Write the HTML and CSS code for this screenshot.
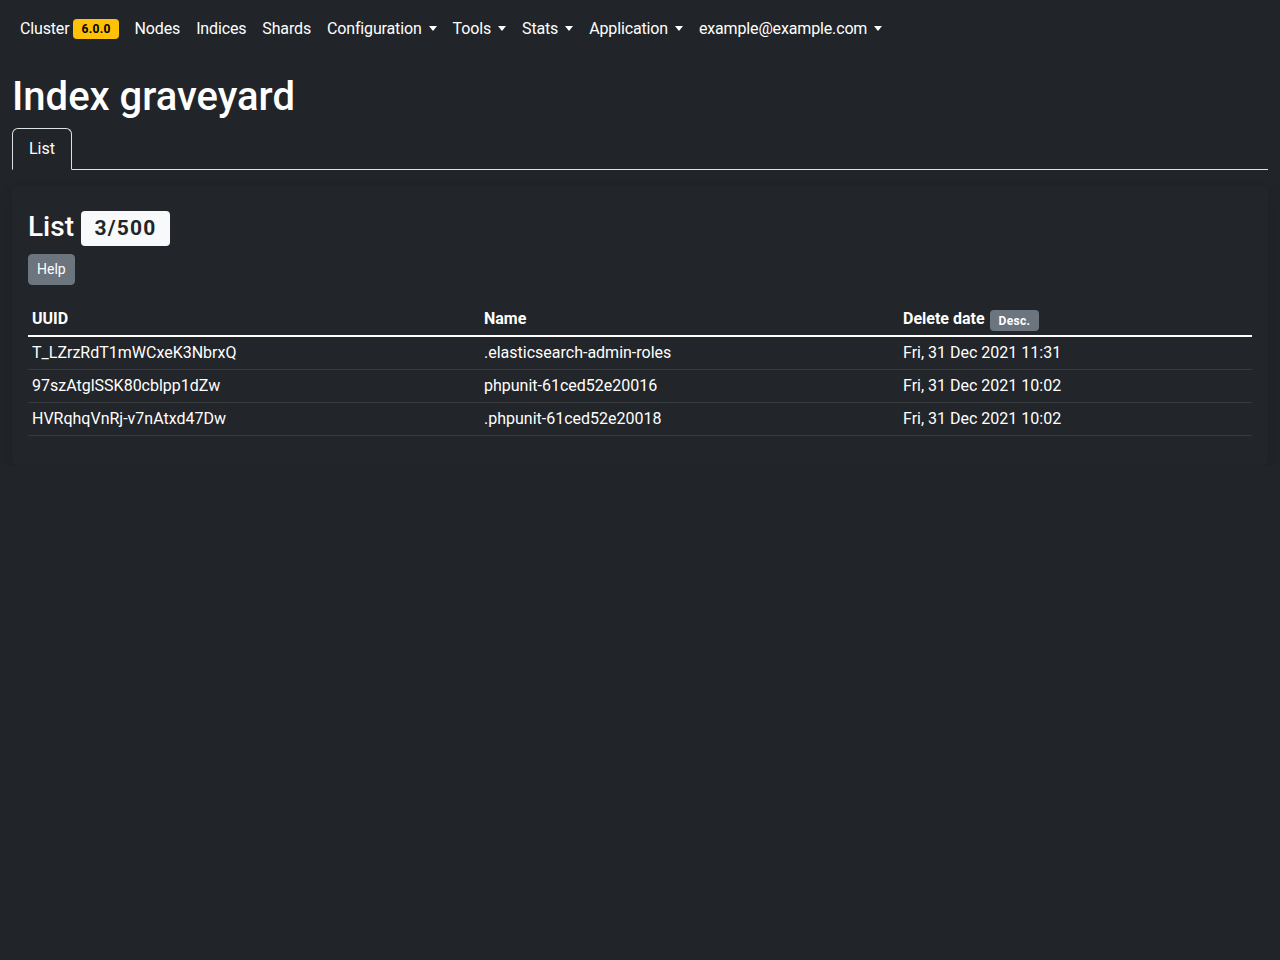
FILE: index.html
```html
<!DOCTYPE html>
<html lang="en">
<head>
<meta charset="utf-8">
<title>Index graveyard</title>
<link rel="stylesheet" href="styles.css">
</head>
<body>
<nav class="navbar">
  <a class="nav-link" href="#">Cluster <span class="badge badge-warning">6.0.0</span></a>
  <a class="nav-link" href="#">Nodes</a>
  <a class="nav-link" href="#">Indices</a>
  <a class="nav-link" href="#">Shards</a>
  <a class="nav-link dropdown" href="#">Configuration</a>
  <a class="nav-link dropdown" href="#">Tools</a>
  <a class="nav-link dropdown" href="#">Stats</a>
  <a class="nav-link dropdown" href="#">Application</a>
  <a class="nav-link dropdown" href="#">example@example.com</a>
</nav>
<main class="container">
  <h1 class="title">Index graveyard</h1>
  <div class="tabs">
    <a class="tab active" href="#">List</a>
  </div>
  <section class="card">
    <h3 class="card-title">List <span class="badge badge-light">3/500</span></h3>
    <button class="btn-help" type="button">Help</button>
    <table class="table">
      <colgroup>
        <col class="c1"><col class="c2"><col class="c3">
      </colgroup>
      <thead>
        <tr><th>UUID</th><th>Name</th><th>Delete date <span class="badge badge-secondary">Desc.</span></th></tr>
      </thead>
      <tbody>
        <tr><td>T_LZrzRdT1mWCxeK3NbrxQ</td><td>.elasticsearch-admin-roles</td><td>Fri, 31 Dec 2021 11:31</td></tr>
        <tr><td>97szAtglSSK80cblpp1dZw</td><td>phpunit-61ced52e20016</td><td>Fri, 31 Dec 2021 10:02</td></tr>
        <tr><td>HVRqhqVnRj-v7nAtxd47Dw</td><td>.phpunit-61ced52e20018</td><td>Fri, 31 Dec 2021 10:02</td></tr>
      </tbody>
    </table>
  </section>
</main>
</body>
</html>
```
FILE: styles.css
```css
* { box-sizing: border-box; }
html, body { margin: 0; padding: 0; }
body {
  background: #212529;
  color: #dee2e6;
  font-family: Roboto, "Liberation Sans", Arial, sans-serif;
  font-size: 16px;
  line-height: 1.5;
}
a { text-decoration: none; }
.navbar {
  display: flex;
  align-items: center;
  height: 56px;
  padding: 0 12px;
}
.nav-link {
  color: #ffffff;
  padding: 8px;
  line-height: 24px;
  display: inline-flex;
  align-items: center;
  position: relative;
  top: 1px;
  letter-spacing: -0.15px;
}
.dropdown::after {
  content: "";
  display: inline-block;
  margin-left: 7px;
  border-top: 5px solid;
  border-right: 4.5px solid transparent;
  border-left: 4.5px solid transparent;
  border-bottom: 0;
  position: relative;
  top: -1px;
}
.badge {
  display: inline-block;
  font-weight: 700;
  line-height: 1;
  border-radius: 4px;
  white-space: nowrap;
  text-align: center;
}
.badge-warning {
  background: #ffc107;
  color: #000;
  font-size: 12px;
  padding: 4px 8px;
  margin-left: 4px;
  letter-spacing: 0.3px;
}
.container { padding: 17px 12px 0; }
.title {
  margin: 0 0 7px;
  font-size: 40px;
  line-height: 48px;
  font-weight: 500;
  color: #ffffff;
}
.tabs {
  display: flex;
  border-bottom: 1px solid #dee2e6;
}
.tab {
  display: block;
  margin-bottom: -1px;
  padding: 8px 16px;
  line-height: 24px;
  color: #ffffff;
  border: 1px solid #dee2e6;
  border-bottom-color: #212529;
  border-top-left-radius: 6px;
  border-top-right-radius: 6px;
  font-size: 16px;
}
.card {
  margin-top: 16px;
  background: #222529;
  border-radius: 6px;
  box-shadow: 0 8px 16px rgba(0, 0, 0, 0.15);
  padding: 24px 16px 14px;
}
.card-title {
  margin: 0 0 8px;
  font-size: 28px;
  line-height: 34px;
  font-weight: 500;
  color: #ffffff;
}
.badge-light {
  background: #f8f9fa;
  color: #212529;
  font-size: 21px;
  padding: 7px 13.5px;
  border-radius: 4px;
  letter-spacing: 1.2px;
  vertical-align: 1px;
}
.btn-help {
  display: block;
  background: #6c757d;
  color: #ffffff;
  border: 1px solid #6c757d;
  border-radius: 4px;
  font-family: inherit;
  font-size: 14px;
  line-height: 21px;
  height: 31px;
  padding: 4px 8px;
  margin: 0 0 18px;
}
.table {
  width: 100%;
  border-collapse: collapse;
  table-layout: fixed;
  color: #ffffff;
  margin-bottom: 16px;
}
.c1 { width: 452px; }
.c2 { width: 419px; }
.table th, .table td {
  text-align: left;
  padding: 4px;
  line-height: 24px;
  font-size: 16px;
}
.table th { font-weight: 700; border-bottom: 2px solid #ffffff; }
.table td { border-bottom: 1px solid #373b3e; }
.badge-secondary {
  background: #6c757d;
  color: #ffffff;
  font-size: 12px;
  padding: 5px 9px 4px;
  letter-spacing: 0.3px;
  vertical-align: -1px;
  margin-left: 1px;
}
```
